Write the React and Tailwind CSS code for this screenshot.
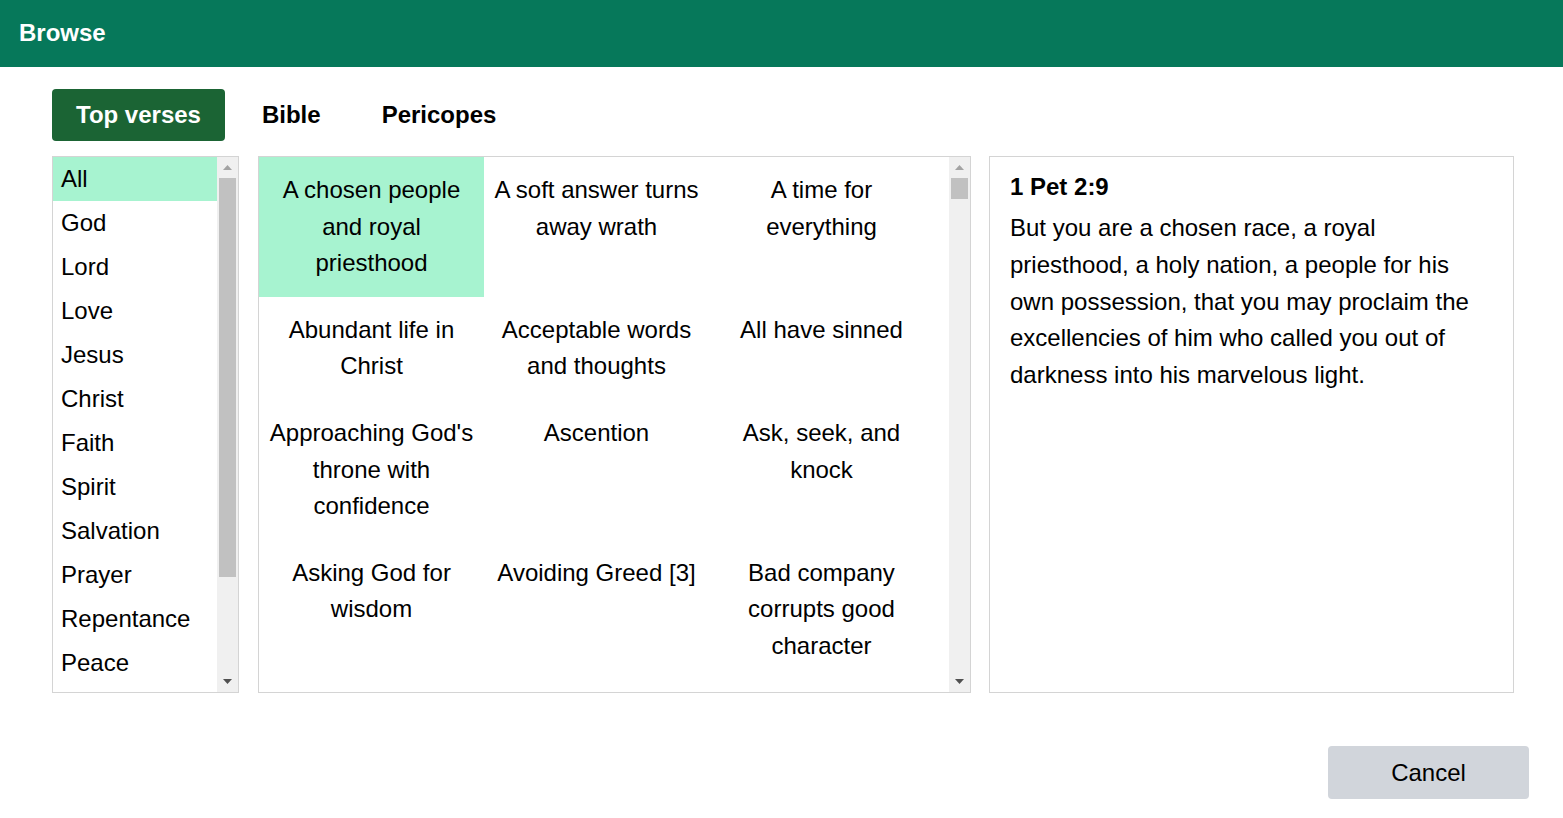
import React from "react";

const topics = ["All","God","Lord","Love","Jesus","Christ","Faith","Spirit","Salvation","Prayer","Repentance","Peace"];
const verses = [
  "A chosen people and royal priesthood",
  "A soft answer turns away wrath",
  "A time for everything",
  "Abundant life in Christ",
  "Acceptable words and thoughts",
  "All have sinned",
  "Approaching God's throne with confidence",
  "Ascention",
  "Ask, seek, and knock",
  "Asking God for wisdom",
  "Avoiding Greed [3]",
  "Bad company corrupts good character",
];

function Scrollbar({ thumbTop, thumbHeight }) {
  return (
    <div className="relative w-[21px] shrink-0 bg-[#f0f0f0]">
      <svg className="absolute left-[6px] top-[8px]" width="9" height="5" viewBox="0 0 9 5">
        <path d="M0 5 L4.5 0 L9 5 Z" fill="#a3a3a3" />
      </svg>
      <div className="absolute left-[2px] right-[2px] bg-[#c1c1c1]" style={{ top: thumbTop, height: thumbHeight }} />
      <svg className="absolute left-[6px] bottom-[8px]" width="9" height="5" viewBox="0 0 9 5">
        <path d="M0 0 L9 0 L4.5 5 Z" fill="#505050" />
      </svg>
    </div>
  );
}

export default function App() {
  return (
    <div className="w-[1563px] h-[818px] bg-white text-black font-['Liberation_Sans',Arial,sans-serif] overflow-hidden">
      <div className="h-[67px] bg-[#06785a] flex items-center px-[19px] pb-[2px]">
        <span className="text-white font-bold text-[24px]">Browse</span>
      </div>
      <div className="pl-[52px] pt-[22px]">
        <div className="flex gap-[13px]">
          <button className="h-[52px] px-6 rounded-[4px] bg-[#1b6434] text-white font-bold text-[24px]">Top verses</button>
          <button className="h-[52px] px-6 font-bold text-[24px] text-black">Bible</button>
          <button className="h-[52px] px-6 font-bold text-[24px] text-black">Pericopes</button>
        </div>
        <div className="flex mt-[15px] h-[537px]">
          <div className="w-[187px] shrink-0 border border-[#d4d4d4] flex overflow-hidden">
            <div className="flex-1 overflow-hidden">
              {topics.map((t, i) => (
                <div key={t} className={`h-[44px] flex items-center pl-2 text-[24px] ${i === 0 ? "bg-[#a7f3d0]" : ""}`}>{t}</div>
              ))}
            </div>
            <Scrollbar thumbTop={21} thumbHeight={399} />
          </div>
          <div className="w-[713px] shrink-0 ml-[19px] border border-[#d4d4d4] flex overflow-hidden">
            <div className="flex-1 overflow-hidden">
              <div className="grid grid-cols-[225px_225px_225px] items-start">
                {verses.map((v, i) => (
                  <div key={v} className={`px-2 py-[15px] text-center text-[24px] leading-[36.6px] h-full ${i === 0 ? "bg-[#a7f3d0]" : ""}`}>{v}</div>
                ))}
              </div>
            </div>
            <Scrollbar thumbTop={21} thumbHeight={21} />
          </div>
          <div className="w-[525px] shrink-0 ml-[18px] border border-[#d4d4d4] pl-[20px] pr-[20px] pt-[12px]">
            <div className="font-bold text-[24px] leading-[36px] mb-[5px]">1 Pet 2:9</div>
            <div className="text-[24px] leading-[36.75px]">
              But you are a chosen race, a royal priesthood, a holy nation, a people for his own possession, that you may proclaim the excellencies of him who called you out of darkness into his marvelous light.
            </div>
          </div>
        </div>
      </div>
      <div className="flex justify-end pr-[34px] mt-[53px]">
        <button className="w-[201px] h-[53px] rounded-[4px] bg-[#d1d5db] text-[24px] text-black">Cancel</button>
      </div>
    </div>
  );
}
